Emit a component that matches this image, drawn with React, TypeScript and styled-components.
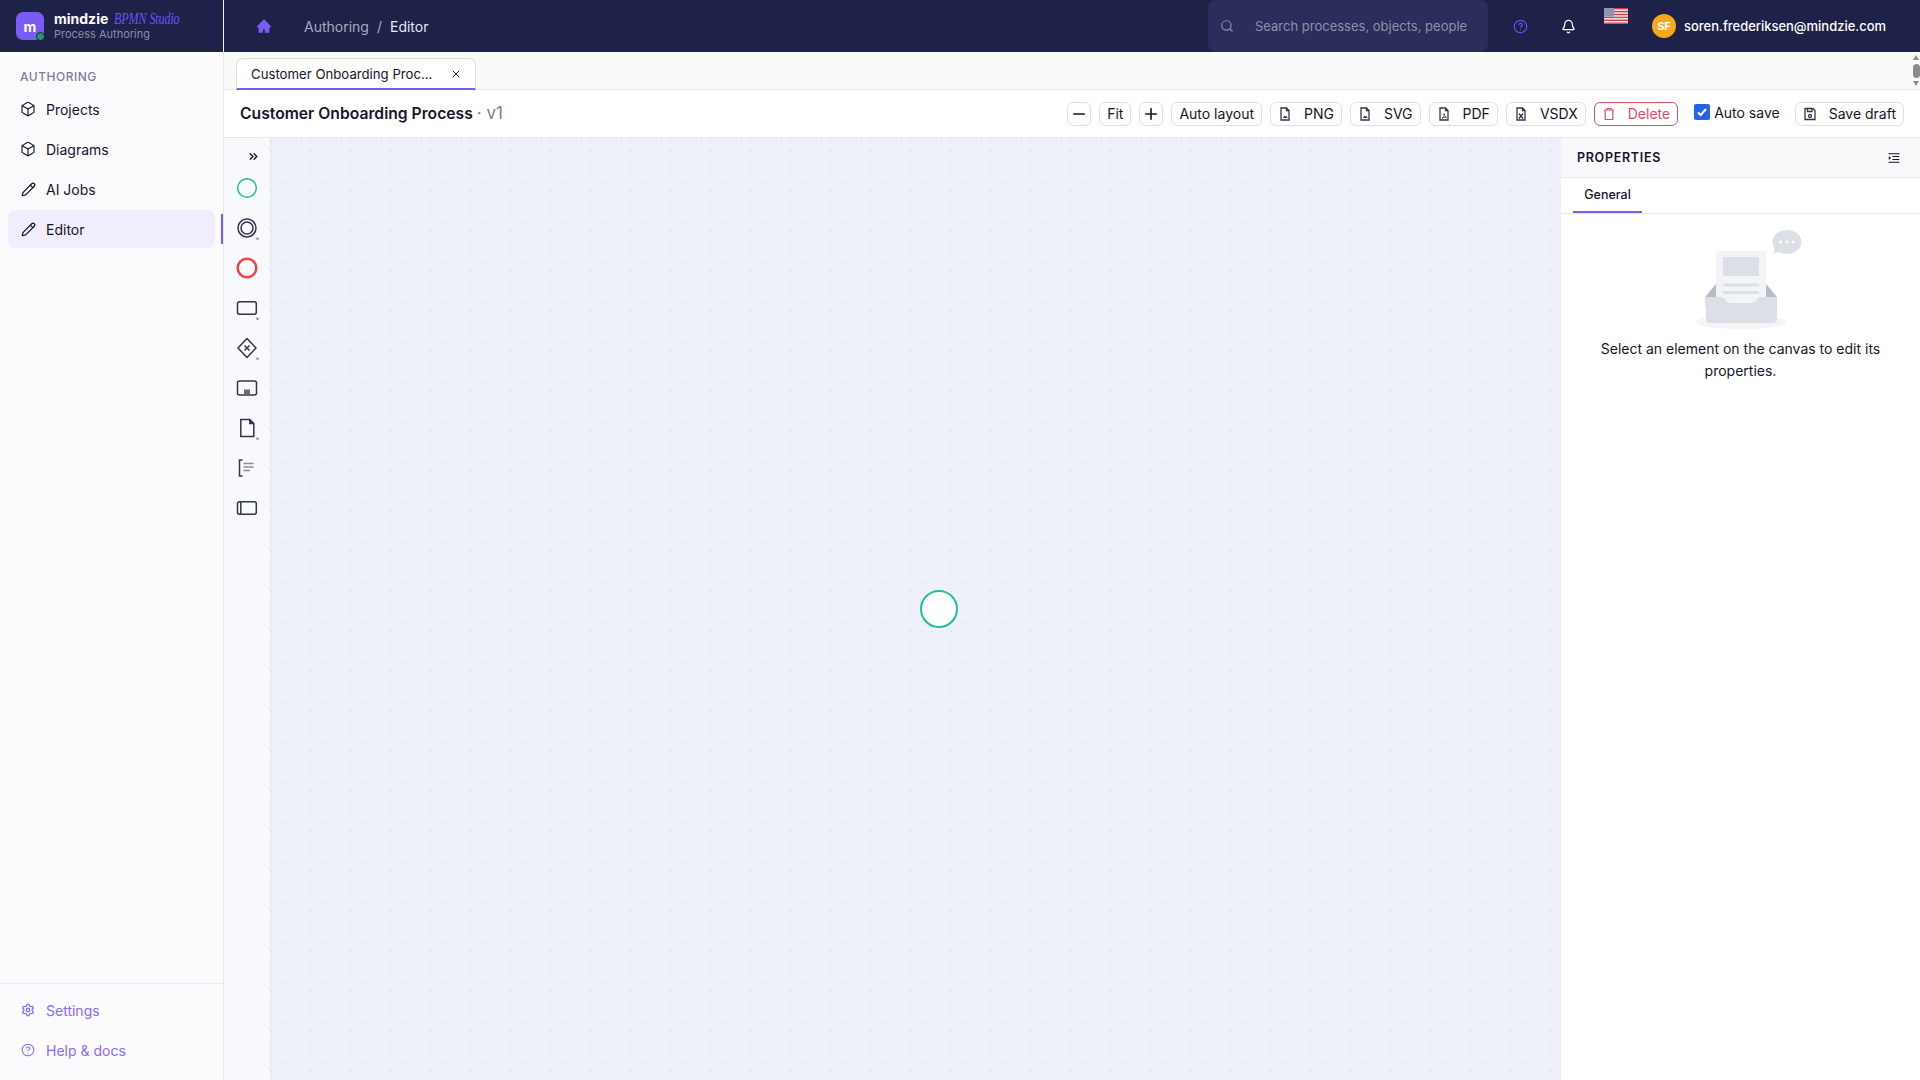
import styled, { createGlobalStyle } from "styled-components";
import {
  Bell,
  Box,
  ChevronsRight,
  CircleHelp,
  Minus,
  Pencil,
  Plus,
  Search,
  Settings,
  X,
} from "lucide-react";
import { AiFillHome, AiOutlineMenuUnfold } from "react-icons/ai";
import type { ReactNode } from "react";

const GlobalStyle = createGlobalStyle`
  html, body, #root {
    margin: 0;
    height: 100%;
  }
  body {
    font-family: Inter, "Liberation Sans", sans-serif;
    font-size: 14px;
    color: #16162c;
    overflow: hidden;
  }
  * {
    box-sizing: border-box;
  }
`;

const Shell = styled.div`
  display: grid;
  grid-template-columns: 224px 1fr;
  height: 1080px;
  width: 1920px;
  overflow: hidden;
`;

const Sidebar = styled.aside`
  display: flex;
  flex-direction: column;
  background: #fbfbfe;
  border-right: 1px solid #e9e9f1;
`;

const Brand = styled.div`
  height: 52px;
  flex: none;
  margin-right: -1px;
  background: #1e2148;
  border-right: 1px solid #f2f2f6;
  display: flex;
  align-items: center;
  padding-left: 16px;
  gap: 10px;
`;

const Logo = styled.div`
  position: relative;
  width: 28px;
  height: 28px;
  border-radius: 7px;
  background: #7a5cf5;
  color: #fff;
  font-weight: 700;
  font-size: 14px;
  display: flex;
  align-items: center;
  justify-content: center;
  &::after {
    content: "";
    position: absolute;
    right: -1px;
    bottom: -1px;
    width: 7px;
    height: 7px;
    border-radius: 50%;
    background: #1f9d5f;
    border: 1.5px solid #1e2148;
  }
`;

const BrandText = styled.div`
  display: flex;
  flex-direction: column;
`;

const BrandName = styled.div`
  display: flex;
  align-items: baseline;
  gap: 6px;
  color: #fff;
  font-weight: 700;
  font-size: 14px;
  line-height: 17px;
`;

const BrandStudio = styled.span`
  display: inline-block;
  font-family: "Liberation Serif", serif;
  font-style: italic;
  font-weight: 400;
  font-size: 16px;
  color: #6b52ff;
  letter-spacing: -0.2px;
  transform: scaleX(0.76);
  transform-origin: left center;
`;

const BrandSub = styled.div`
  color: #8c8da6;
  font-size: 11px;
  line-height: 15px;
`;

const NavLabel = styled.div`
  font-size: 12px;
  font-weight: 500;
  letter-spacing: 0.5px;
  color: #7b7e98;
  padding: 17px 20px 0;
  line-height: 16px;
  margin-bottom: 5px;
`;

const NavList = styled.nav`
  flex: 1;
  display: flex;
  flex-direction: column;
  gap: 2px;
  padding: 0 8px;
`;

const NavItem = styled.div<{ $active?: boolean; $muted?: boolean }>`
  position: relative;
  height: 38px;
  display: flex;
  align-items: center;
  gap: 11px;
  padding-left: 13px;
  border-radius: 8px;
  background: ${(p) => (p.$active ? "#f1edfd" : "transparent")};
  color: ${(p) => (p.$muted ? "#8a6cf7" : "#16162c")};
  &::after {
    content: "";
    display: ${(p) => (p.$active ? "block" : "none")};
    position: absolute;
    right: -8px;
    top: 4px;
    width: 2px;
    height: 30px;
    background: #7a5cf5;
  }
`;

const NavIcon = styled.span`
  width: 14px;
  height: 16px;
  flex: none;
  display: flex;
  align-items: center;
  justify-content: center;
  svg {
    flex: none;
  }
`;

const NavFooter = styled.div`
  border-top: 1px solid #e9e9f1;
  display: flex;
  flex-direction: column;
  gap: 2px;
  padding: 7px 8px 8px;
  height: 97px;
`;

const Main = styled.main`
  display: flex;
  flex-direction: column;
  min-width: 0;
  height: 1080px;
`;

const Topbar = styled.header`
  height: 52px;
  flex: none;
  background: #1e2148;
  display: flex;
  align-items: center;
  padding: 0 34px 0 32px;
  color: #fff;
`;

const HomeLink = styled.span`
  color: #7a5cf5;
  display: flex;
  margin-right: 32px;
`;

const Crumbs = styled.div`
  display: flex;
  gap: 8px;
  color: #a9aac0;
  flex: 1;
`;

const CrumbCurrent = styled.span`
  color: #e8e8f2;
`;

const SearchBox = styled.div`
  width: 280px;
  height: 52px;
  border-radius: 8px;
  background: #2b2d5a;
  display: flex;
  align-items: center;
  color: #8e90ab;
  font-size: 13px;
  padding-left: 12px;
  gap: 21px;
  margin-right: 25px;
  white-space: nowrap;
  overflow: hidden;
`;

const TopIcon = styled.span<{ $color: string; $gap: number }>`
  display: flex;
  color: ${(p) => p.$color};
  margin-right: ${(p) => p.$gap}px;
`;

const Flag = styled.svg`
  margin-right: 24px;
  align-self: flex-start;
  margin-top: 8px;
`;

const Avatar = styled.div`
  width: 24px;
  height: 24px;
  border-radius: 50%;
  background: #f9a81a;
  color: #fff;
  font-size: 11px;
  font-weight: 700;
  display: flex;
  align-items: center;
  justify-content: center;
  margin-right: 8px;
`;

const UserEmail = styled.span`
  font-size: 12.96px;
  font-weight: 500;
  color: #fff;
  white-space: nowrap;
`;

const TabBar = styled.div`
  position: relative;
  height: 38px;
  flex: none;
  background: #fafafa;
  border-bottom: 1px solid #e6e6ec;
  padding: 6px 0 0 12px;
  display: flex;
`;

const Tab = styled.div`
  width: 240px;
  height: 32px;
  background: #fff;
  border: 1px solid #dedee6;
  border-bottom: 2px solid #7a5cf5;
  border-radius: 7px 7px 0 0;
  display: flex;
  align-items: center;
  justify-content: space-between;
  padding: 0 13px 0 14px;
  font-size: 13.2px;
  white-space: nowrap;
`;

const ScrollTrack = styled.div`
  position: absolute;
  top: 0;
  right: 0;
  bottom: 0;
  width: 8px;
  display: flex;
  flex-direction: column;
  align-items: center;
  justify-content: space-between;
  padding: 3px 0;
`;

const ScrollArrow = styled.span<{ $down?: boolean }>`
  width: 0;
  height: 0;
  border-left: 3.5px solid transparent;
  border-right: 3.5px solid transparent;
  border-${(p) => (p.$down ? "top" : "bottom")}: 5px solid #8c8c8c;
`;

const ScrollThumb = styled.span`
  width: 7px;
  height: 14px;
  border-radius: 4px;
  background: #8c8c8c;
`;

const Toolbar = styled.div`
  height: 48px;
  flex: none;
  display: flex;
  align-items: center;
  background: #fff;
  border-bottom: 1px solid #e6e6f2;
  padding: 0 16px;
  gap: 8px;
`;

const Title = styled.div`
  flex: 1;
  font-size: 15.7px;
  font-weight: 600;
  color: #16162c;
  white-space: nowrap;
  margin-top: -1px;
`;

const Version = styled.span`
  font-size: 17px;
  font-weight: 400;
  color: #7d7d90;
`;

const Btn = styled.button<{ $square?: boolean; $danger?: boolean }>`
  height: 24px;
  width: ${(p) => (p.$square ? "24px" : "auto")};
  padding: ${(p) => (p.$square ? "0" : "0 7px")};
  display: inline-flex;
  align-items: center;
  justify-content: center;
  gap: 12px;
  font: inherit;
  font-size: 14px;
  background: #fff;
  color: ${(p) => (p.$danger ? "#d9506a" : "#16162c")};
  border: 1px solid ${(p) => (p.$danger ? "#d9506a" : "#dfdfe4")};
  border-radius: 6px;
  white-space: nowrap;
`;

const CheckLabel = styled.label`
  display: flex;
  align-items: center;
  gap: 4px;
  margin: -3px 7px 0 8px;
  white-space: nowrap;
`;

const CheckBox = styled.span`
  width: 16px;
  height: 16px;
  background: #2563eb;
  border-radius: 2px;
  display: flex;
  align-items: center;
  justify-content: center;
`;

const Workspace = styled.div`
  flex: 1;
  min-height: 0;
  display: flex;
`;

const Palette = styled.div`
  width: 47px;
  flex: none;
  background: #f8f9fd;
  border-right: 1px solid #e6e6f2;
  display: flex;
  flex-direction: column;
  align-items: center;
  padding-top: 8px;
`;

const PaletteToggle = styled.div`
  height: 20px;
  width: 100%;
  padding-right: 10px;
  display: flex;
  align-items: center;
  justify-content: flex-end;
  color: #16162c;
  margin-bottom: 2px;
`;

const PaletteItem = styled.div`
  height: 40px;
  display: flex;
  align-items: center;
  justify-content: center;
`;

const Canvas = styled.div`
  position: relative;
  flex: 1;
  background-color: #eef1fa;
  background-image: radial-gradient(circle at 0.5px 0.5px, #ced2e2 0.6px, transparent 0.9px);
  background-size: 10px 10px;
  background-position: 0 3px;
`;

const StartNode = styled.div`
  position: absolute;
  left: 649px;
  top: 452px;
  width: 38px;
  height: 38px;
  border-radius: 50%;
  background: #fff;
  border: 2px solid #22c08f;
`;

const Properties = styled.aside`
  width: 359px;
  flex: none;
  background: #fff;
  display: flex;
  flex-direction: column;
`;

const PropsHeader = styled.div`
  height: 40px;
  flex: none;
  background: #f9f9fb;
  border-bottom: 1px solid #e9e9f3;
  display: flex;
  align-items: center;
  justify-content: space-between;
  padding: 0 19px 0 16px;
`;

const PropsTitle = styled.div`
  font-size: 12.5px;
  font-weight: 600;
  letter-spacing: 0.7px;
`;

const PropsTabs = styled.div`
  height: 36px;
  flex: none;
  border-bottom: 1px solid #e9e9f3;
  padding-left: 12px;
  display: flex;
`;

const PropsTab = styled.div`
  width: 69px;
  height: 35px;
  font-size: 12.5px;
  font-weight: 500;
  border-bottom: 2px solid #7a5cf5;
  display: flex;
  align-items: center;
  justify-content: center;
`;

const EmptyState = styled.div`
  display: flex;
  flex-direction: column;
  align-items: center;
  padding: 11px 16px 0;
  text-align: center;
  line-height: 22px;
`;

const EmptyArt = styled.svg`
  margin-bottom: 3px;
`;

const ink = "#34344a";

const Marker = () => <path d="M23.500 23l3 1.700-3 1.700z" fill="#8a8a94" stroke="none" />;

const PaletteIcon = ({ children }: { children: ReactNode }) => (
  <PaletteItem>
    <svg width="28" height="28" viewBox="0 0 28 28" fill="none" stroke={ink} strokeWidth="1.5">
      {children}
    </svg>
  </PaletteItem>
);

const FileIcon = ({ color = "#34344a", mark }: { color?: string; mark: ReactNode }) => (
  <svg width="14" height="14" viewBox="0 0 14 14" fill="none" stroke={color} strokeWidth="1.3">
    <path d="M3 1h5.500L11 3.500V13H3z" />
    <path d="M8.500 1v2.500H11" />
    {mark}
  </svg>
);

const imageMark = <path d="M4.800 11l1.800-2.600 1.200 1.400.8-.8 1 2z" fill="#34344a" stroke="none" />;
const pdfMark = <path d="M5 11.500c1.500-1 2.500-3 2-5 .4 2 1.400 3.400 2.500 4-1.500-.3-3-.2-4.500 1z" strokeWidth="0.8" />;
const vsdxMark = <path d="M5 6.500l4 5M9 6.500l-4 5" />;

const files = [
  { label: "PNG", mark: imageMark },
  { label: "SVG", mark: imageMark },
  { label: "PDF", mark: pdfMark },
  { label: "VSDX", mark: vsdxMark },
];

const App = () => {
  return (
    <Shell>
      <GlobalStyle />
      <Sidebar>
        <Brand>
          <Logo>m</Logo>
          <BrandText>
            <BrandName>
              mindzie <BrandStudio>BPMN Studio</BrandStudio>
            </BrandName>
            <BrandSub>Process Authoring</BrandSub>
          </BrandText>
        </Brand>
        <NavLabel>AUTHORING</NavLabel>
        <NavList>
          <NavItem>
            <NavIcon>
              <Box size={16} strokeWidth={1.7} />
            </NavIcon>
            Projects
          </NavItem>
          <NavItem>
            <NavIcon>
              <Box size={16} strokeWidth={1.7} />
            </NavIcon>
            Diagrams
          </NavItem>
          <NavItem>
            <NavIcon>
              <Pencil size={15} strokeWidth={2} />
            </NavIcon>
            AI Jobs
          </NavItem>
          <NavItem $active>
            <NavIcon>
              <Pencil size={15} strokeWidth={2} />
            </NavIcon>
            Editor
          </NavItem>
        </NavList>
        <NavFooter>
          <NavItem $muted>
            <NavIcon>
              <Settings size={14} strokeWidth={2.2} />
            </NavIcon>
            Settings
          </NavItem>
          <NavItem $muted>
            <NavIcon>
              <CircleHelp size={14} strokeWidth={1.8} />
            </NavIcon>
            Help &amp; docs
          </NavItem>
        </NavFooter>
      </Sidebar>
      <Main>
        <Topbar>
          <HomeLink>
            <AiFillHome size={16} />
          </HomeLink>
          <Crumbs>
            <span>Authoring</span>
            <span>/</span>
            <CrumbCurrent>Editor</CrumbCurrent>
          </Crumbs>
          <SearchBox>
            <Search size={14} />
            <span>Search processes, objects, people</span>
          </SearchBox>
          <TopIcon $color="#6a4df0" $gap={33}>
            <CircleHelp size={15} />
          </TopIcon>
          <TopIcon $color="#ffffff" $gap={28}>
            <Bell size={15} />
          </TopIcon>
          <Flag width="24" height="16" viewBox="0 0 24 16">
            <rect width="24" height="16" fill="#f3e9e9" />
            {[0, 1, 2, 3, 4, 5].map((i) => (
              <rect key={i} y={i * 2.9} width="24" height="1.400" fill="#c8414f" />
            ))}
            <rect width="10" height="8.500" fill="#8f93ad" />
          </Flag>
          <Avatar>SF</Avatar>
          <UserEmail>soren.frederiksen@mindzie.com</UserEmail>
        </Topbar>
        <TabBar>
          <Tab>
            <span>Customer Onboarding Proc...</span>
            <X size={12} />
          </Tab>
          <ScrollTrack>
            <ScrollArrow />
            <ScrollThumb />
            <ScrollArrow $down />
          </ScrollTrack>
        </TabBar>
        <Toolbar>
          <Title>
            Customer Onboarding Process <Version>· v1</Version>
          </Title>
          <Btn $square>
            <Minus size={18} strokeWidth={2.2} />
          </Btn>
          <Btn>Fit</Btn>
          <Btn $square>
            <Plus size={18} strokeWidth={2.2} />
          </Btn>
          <Btn>Auto layout</Btn>
          {files.map((f) => (
            <Btn key={f.label}>
              <FileIcon mark={f.mark} />
              {f.label}
            </Btn>
          ))}
          <Btn $danger>
            <svg width="14" height="14" viewBox="0 0 14 14" fill="none" stroke="#d9506a" strokeWidth="1.2">
              <path d="M2 3h10M5 3V1.500h4V3M3.200 3v9.500h7.600V3" />
            </svg>
            Delete
          </Btn>
          <CheckLabel>
            <CheckBox>
              <svg width="12" height="12" viewBox="0 0 12 12" fill="none" stroke="#fff" strokeWidth="2">
                <path d="M2 6.500l2.800 2.500L10 3" />
              </svg>
            </CheckBox>
            Auto save
          </CheckLabel>
          <Btn>
            <svg width="14" height="14" viewBox="0 0 14 14" fill="none" stroke="#34344a" strokeWidth="1.3">
              <path d="M2 1.500h8l2 2v9H2z" />
              <path d="M4.500 1.500v3h4.500v-3" />
              <circle cx="7" cy="9" r="1.500" />
            </svg>
            Save draft
          </Btn>
        </Toolbar>
        <Workspace>
          <Palette>
            <PaletteToggle>
              <ChevronsRight size={13} strokeWidth={2.6} />
            </PaletteToggle>
            <PaletteIcon>
              <circle cx="14" cy="14" r="9.300" stroke="#22c08f" />
            </PaletteIcon>
            <PaletteIcon>
              <circle cx="14" cy="14" r="9" />
              <circle cx="14" cy="14" r="6" />
              <Marker />
            </PaletteIcon>
            <PaletteIcon>
              <circle cx="14" cy="14" r="9.300" stroke="#ef4444" strokeWidth="2.500" />
            </PaletteIcon>
            <PaletteIcon>
              <rect x="4.500" y="7.800" width="18.800" height="12.400" rx="2" />
              <Marker />
            </PaletteIcon>
            <PaletteIcon>
              <path d="M14 4.500l9 9.500-9 9.500L5 14z" strokeLinejoin="round" />
              <path d="M11.500 11.500l5 5M16.500 11.500l-5 5" />
              <Marker />
            </PaletteIcon>
            <PaletteIcon>
              <rect x="4.500" y="7" width="19" height="14" rx="2" />
              <rect x="11" y="15.500" width="6" height="5" fill="#6a6a78" stroke="none" />
            </PaletteIcon>
            <PaletteIcon>
              <path d="M7.800 5.500h9l4 4v13h-13z" />
              <path d="M16.800 5.500v4h4" fill={ink} />
              <Marker />
            </PaletteIcon>
            <PaletteIcon>
              <path d="M9.500 6H6.500v16h3" />
              <path d="M10.500 9.500h10M10.500 13h10M10.500 16.500h6.500" stroke="#8a8a96" />
            </PaletteIcon>
            <PaletteIcon>
              <rect x="4.500" y="7.800" width="18.800" height="12.400" rx="2" />
              <path d="M7.800 7.800v12.400" />
            </PaletteIcon>
          </Palette>
          <Canvas>
            <StartNode />
          </Canvas>
          <Properties>
            <PropsHeader>
              <PropsTitle>PROPERTIES</PropsTitle>
              <AiOutlineMenuUnfold size={14} />
            </PropsHeader>
            <PropsTabs>
              <PropsTab>General</PropsTab>
            </PropsTabs>
            <EmptyState>
              <EmptyArt width="130" height="110" viewBox="-14 0 130 110">
                <ellipse cx="51" cy="97" rx="45" ry="7" fill="#f5f5f7" />
                <path d="M15 72l11-13v13zM87 72L76 59v13z" fill="#b4bcc6" />
                <rect x="26" y="26" width="50" height="52" rx="1" fill="#f3f4f6" />
                <rect x="33" y="32" width="36" height="19" rx="1" fill="#dcdfe6" />
                <rect x="33" y="58.500" width="36" height="3" rx="1.500" fill="#dcdfe6" />
                <rect x="33" y="66" width="36" height="3" rx="1.500" fill="#dcdfe6" />
                <path
                  d="M15 72H31q3 0 4 3l1 1q1 2 4 2H62q3 0 4-2l1-1q1-3 4-3H87V94q0 4-4 4H20q-4 0-4-4V82l-1-1z"
                  fill="#dcdfe6"
                />
                <ellipse cx="97" cy="17" rx="14.500" ry="12" fill="#dcdfe6" />
                <path d="M85 22l-2 7 9-4z" fill="#dcdfe6" />
                <circle cx="90.500" cy="17" r="1.500" fill="#fff" />
                <circle cx="97" cy="17" r="1.500" fill="#fff" />
                <circle cx="103" cy="17" r="1.500" fill="#fff" />
              </EmptyArt>
              Select an element on the canvas to edit its properties.
            </EmptyState>
          </Properties>
        </Workspace>
      </Main>
    </Shell>
  );
};

export default App;
